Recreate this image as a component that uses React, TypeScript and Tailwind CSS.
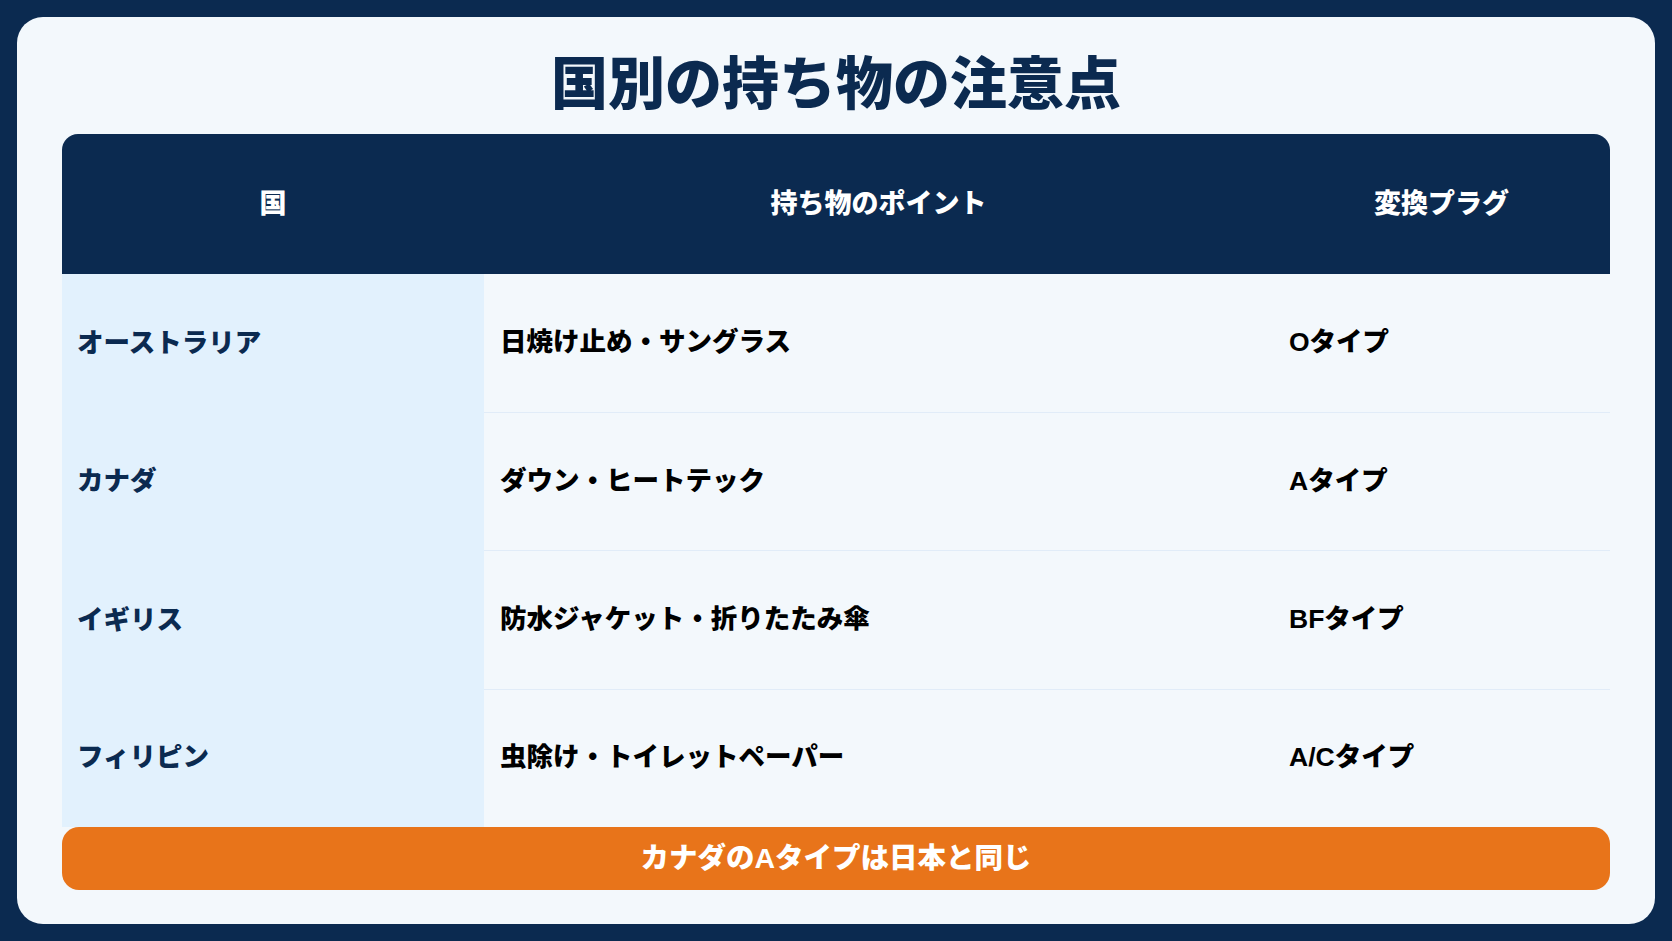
const rows = [
  { country: "オーストラリア", point: "日焼け止め・サングラス", plug: "Oタイプ" },
  { country: "カナダ", point: "ダウン・ヒートテック", plug: "Aタイプ" },
  { country: "イギリス", point: "防水ジャケット・折りたたみ傘", plug: "BFタイプ" },
  { country: "フィリピン", point: "虫除け・トイレットペーパー", plug: "A/Cタイプ" },
];

const font = "font-['Liberation_Sans','Noto_Sans_CJK_JP',sans-serif]";

export default function App() {
  return (
    <div className={`h-[941px] w-[1672px] bg-[#0b2a50] p-[17px] ${font}`}>
      <div className="flex h-full flex-col rounded-[26px] bg-[#f3f8fc] px-[45px] pt-[33px] pb-[34px]">
        <h1 className="mb-[16px] text-center text-[57px] leading-[1.2] font-black text-[#0b2a50]">
          国別の持ち物の注意点
        </h1>

        <div className="flex flex-1 flex-col">
          {/* header */}
          <div className="grid h-[140px] grid-cols-[422px_789px_1fr] items-center rounded-t-[16px] bg-[#0b2a50] text-center text-[27px] font-black text-white">
            <div>国</div>
            <div>持ち物のポイント</div>
            <div>変換プラグ</div>
          </div>

          {/* body */}
          <div className="grid flex-1 grid-cols-[422px_789px_1fr]">
            {rows.map((r, i) => {
              const last = i === rows.length - 1;
              const line = last ? "" : "border-b border-[#e1ecf8]";
              return (
                <div key={r.country} className="contents">
                  <div className="flex items-center bg-[#e2f1fd] px-[15px] text-[26.5px] font-black text-[#0b2a50]">
                    {r.country}
                  </div>
                  <div className={`flex items-center px-[16px] text-[26.5px] font-black text-black ${line}`}>
                    {r.point}
                  </div>
                  <div className={`flex items-center px-[16px] text-[26.5px] font-black text-black ${line}`}>
                    {r.plug}
                  </div>
                </div>
              );
            })}
          </div>

          <div className="flex h-[63px] items-center justify-center rounded-[17px] bg-[#e8741a] text-[28.5px] font-black text-white">
            カナダのAタイプは日本と同じ
          </div>
        </div>
      </div>
    </div>
  );
}
